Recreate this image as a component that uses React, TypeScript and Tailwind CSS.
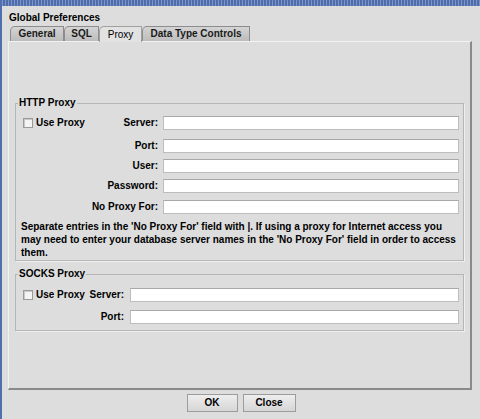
import React from "react";

const font = { fontFamily: '"Liberation Sans", Arial, sans-serif' };

function Field({ className = "" }: { className?: string }) {
  return (
    <div
      className={
        "h-[14px] flex-1 bg-white border border-[#bdbdbd] border-t-[#a8a8a8] " +
        className
      }
    />
  );
}

function Check() {
  return (
    <span className="inline-block w-[10px] h-[10px] border border-[#9a9a9a] bg-[#f4f4f4] shadow-[inset_1px_1px_0_#c8c8c8]" />
  );
}

function Tab({ label, active, w }: { label: string; active?: boolean; w: string }) {
  return (
    <div
      className={
        "relative flex items-center justify-center border border-b-0 rounded-tl-[5px] " +
        w +
        (active
          ? " h-[16px] bg-[#e2e2e2] border-[#a0a0a0] z-10 -mb-px"
          : " h-[15px] bg-gradient-to-b from-[#d4d4d4] to-[#bcbcbc] border-[#8c8c8c]")
      }
    >
      <span className={"text-[10px] leading-none " + (active ? "font-normal text-black" : "font-bold text-[#1a1a1a]")}>
        {label}
      </span>
    </div>
  );
}

const lab = "text-[10px] font-bold leading-[14px]";

export default function App() {
  return (
    <div
      style={font}
      className="w-[480px] h-[419px] bg-[#dddddd] flex flex-col border-l-2 border-[#4f6fae] text-black overflow-hidden"
    >
      <div className="h-[6px] shrink-0 bg-[#5674b0] bg-[repeating-linear-gradient(90deg,#7b95c8_0px,#7b95c8_1px,#4f6dab_1px,#4f6dab_3px)]" />
      <div className="h-[19px] flex items-end pl-[7px] pb-[2px]">
        <span className="text-[10px] font-bold leading-none">Global Preferences</span>
      </div>
      <div className="flex pl-[8px] h-[16px] items-end">
        <Tab label="General" w="w-[54px]" />
        <Tab label="SQL" w="w-[35px]" />
        <Tab label="Proxy" w="w-[43px]" active />
        <Tab label="Data Type Controls" w="w-[108px]" />
      </div>
      <div className="ml-[6px] mr-[8px] h-[349px] shrink-0 bg-[#dddddd] border-t border-l border-t-[#f2f2f2] border-l-[#f2f2f2] border-r-2 border-b-2 border-r-[#8a8a8a] border-b-[#8a8a8a] flex flex-col px-[6px] pt-[56px]">
        <fieldset className="border border-[#b6b6b6] shadow-[1px_1px_0_#efefef] px-[4px] pb-[1px] pt-[8px] mx-0">
          <legend className="text-[10px] font-bold leading-none px-[1px] -ml-[2px]">HTTP Proxy</legend>
          <div className="flex flex-col gap-[6px]">
            <div className="flex items-center h-[14px] mb-[3px]">
              <div className="w-[138px] flex items-center justify-between pl-[3px]">
                <span className="flex items-center gap-[3px]">
                  <Check />
                  <span className={lab}>Use Proxy</span>
                </span>
                <span className={lab}>Server:</span>
              </div>
              <Field className="ml-[5px]" />
            </div>
            <div className="flex items-center h-[14px]">
              <div className={"w-[138px] text-right " + lab}>Port:</div>
              <Field className="ml-[5px]" />
            </div>
            <div className="flex items-center h-[14px]">
              <div className={"w-[138px] text-right " + lab}>User:</div>
              <Field className="ml-[5px]" />
            </div>
            <div className="flex items-center h-[14px]">
              <div className={"w-[138px] text-right " + lab}>Password:</div>
              <Field className="ml-[5px]" />
            </div>
            <div className="flex items-center h-[14px] mt-[1px]">
              <div className={"w-[138px] text-right " + lab}>No Proxy For:</div>
              <Field className="ml-[5px]" />
            </div>
          </div>
          <p className="mt-[6px] pl-[1px] text-[10px] font-bold leading-[13px]">
            Separate entries in the 'No Proxy For' field with |. If using a proxy for Internet access you may need to enter your database server names in the 'No Proxy For' field in order to access them.
          </p>
        </fieldset>
        <fieldset className="mt-[8px] border border-[#b6b6b6] shadow-[1px_1px_0_#efefef] px-[4px] pb-[6px] pt-[9px] mx-0">
          <legend className="text-[10px] font-bold leading-none px-[1px] -ml-[2px]">SOCKS Proxy</legend>
          <div className="flex flex-col gap-[8px]">
            <div className="flex items-center h-[14px]">
              <div className="w-[104px] flex items-center justify-between pl-[3px]">
                <span className="flex items-center gap-[3px]">
                  <Check />
                  <span className={lab}>Use Proxy</span>
                </span>
                <span className={lab}>Server:</span>
              </div>
              <Field className="ml-[6px]" />
            </div>
            <div className="flex items-center h-[14px]">
              <div className={"w-[104px] text-right " + lab}>Port:</div>
              <Field className="ml-[6px]" />
            </div>
          </div>
        </fieldset>
      </div>
      <div className="flex justify-center gap-[5px] pt-[4px]">
        <button className="w-[51px] h-[18px] border border-[#9c9c9c] bg-gradient-to-b from-[#eeeeee] to-[#d6d6d6] text-[10px] font-bold leading-none">
          OK
        </button>
        <button className="w-[53px] h-[18px] border border-[#9c9c9c] bg-gradient-to-b from-[#eeeeee] to-[#d6d6d6] text-[10px] font-bold leading-none">
          Close
        </button>
      </div>
    </div>
  );
}
